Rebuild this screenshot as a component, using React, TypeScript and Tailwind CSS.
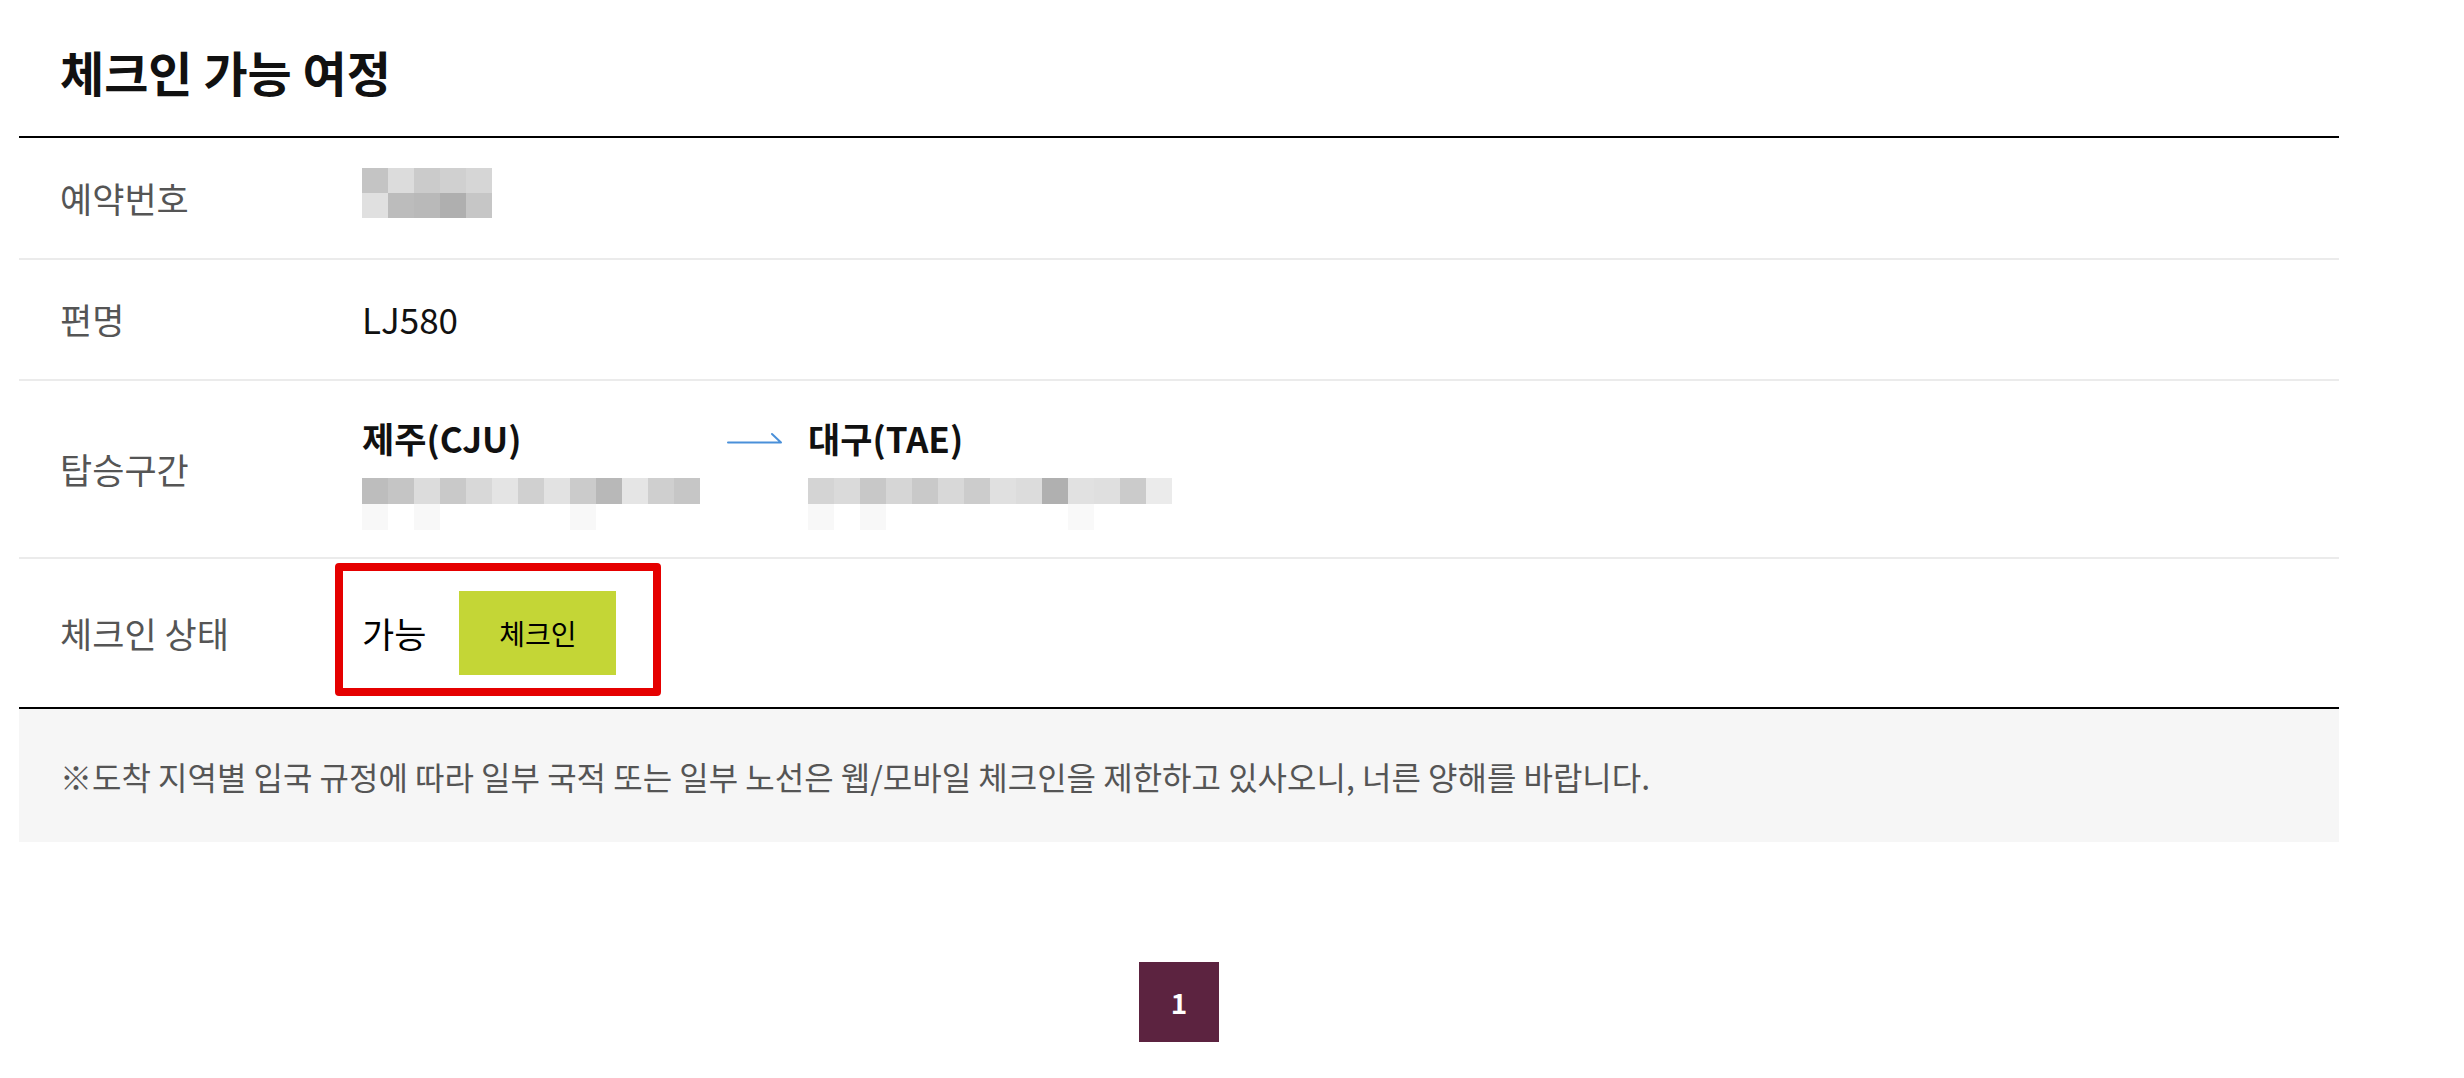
import React from 'react';

const FONT = { fontFamily: '"Noto Sans CJK KR", "Noto Sans", sans-serif' };

const bookingBlur = [
  ['#c4c4c4', '#dcdcdc', '#cbcbcb', '#d0d0d0', '#d6d6d6'],
  ['#e0e0e0', '#bcbcbc', '#b9b9b9', '#afafaf', '#c6c6c6'],
];

const departBlur = [
  ['#bdbdbd', '#c5c5c5', '#dcdcdc', '#c9c9c9', '#d8d8d8', '#e4e4e4', '#d0d0d0', '#e2e2e2', '#cbcbcb', '#b8b8b8', '#e5e5e5', '#cfcfcf', '#c6c6c6'],
  ['#f8f8f8', '#ffffff', '#f8f8f8', '#ffffff', '#ffffff', '#ffffff', '#ffffff', '#ffffff', '#f8f8f8', '#ffffff', '#ffffff', '#ffffff', '#ffffff'],
];

const arriveBlur = [
  ['#d4d4d4', '#dadada', '#c8c8c8', '#d6d6d6', '#c9c9c9', '#d8d8d8', '#cccccc', '#e0e0e0', '#dcdcdc', '#b0b0b0', '#e1e1e1', '#dfdfdf', '#cbcbcb', '#ebebeb'],
  ['#f8f8f8', '#ffffff', '#f8f8f8', '#ffffff', '#ffffff', '#ffffff', '#ffffff', '#ffffff', '#ffffff', '#ffffff', '#f9f9f9', '#ffffff', '#ffffff', '#ffffff'],
];

// masked personal info, drawn as a pixelated block
const Mosaic = ({ rows, h }: { rows: string[][]; h: number }) => (
  <div className="flex flex-col">
    {rows.map((row, i) => (
      <div key={i} className="flex">
        {row.map((c, j) => (
          <div key={j} className="w-[26px]" style={{ backgroundColor: c, height: h }} />
        ))}
      </div>
    ))}
  </div>
);

const Label = ({ children }: { children: React.ReactNode }) => (
  <div className="w-[343px] shrink-0 pl-[41px] text-[35px] text-[#555555]">{children}</div>
);

const App: React.FC = () => {
  return (
    <div className="min-h-screen bg-white" style={FONT}>
      <div className="ml-[19px] w-[2320px]">
        <div className="h-[136px] pl-[41px] pt-[47px]">
          <h2 className="text-[48px] leading-[48px] font-bold text-[#111111]">체크인 가능 여정</h2>
        </div>

        <div className="border-t-2 border-black">
          {/* 예약번호 */}
          <div className="flex h-[122px] items-center border-b-2 border-[#ebebeb]">
            <Label>예약번호</Label>
            <div className="mb-[10px]">
              <Mosaic rows={bookingBlur} h={25} />
            </div>
          </div>

          {/* 편명 */}
          <div className="flex h-[121px] items-center border-b-2 border-[#ebebeb]">
            <Label>편명</Label>
            <div className="text-[35px] text-[#111111]">LJ580</div>
          </div>

          {/* 탑승구간 */}
          <div className="flex h-[178px] items-center border-b-2 border-[#ebebeb]">
            <Label>탑승구간</Label>
            <div className="flex items-start pt-[10px]">
              <div className="w-[340px]">
                <div className="text-[35px] leading-[40px] font-bold text-[#111111]">제주(CJU)</div>
                <div className="mt-[20px]">
                  <Mosaic rows={departBlur} h={26} />
                </div>
              </div>
              <div className="ml-[25px] flex h-[40px] items-center">
                <svg width="56" height="16" viewBox="0 0 56 16" fill="none">
                  <path d="M1 12.5 H54 L45 4" stroke="#4a90d9" strokeWidth="2" strokeLinecap="round" strokeLinejoin="round" />
                </svg>
              </div>
              <div className="ml-[25px]">
                <div className="text-[35px] leading-[40px] font-bold text-[#111111]">대구(TAE)</div>
                <div className="mt-[20px]">
                  <Mosaic rows={arriveBlur} h={26} />
                </div>
              </div>
            </div>
          </div>

          {/* 체크인 상태 */}
          <div className="flex h-[150px] items-center border-b-2 border-black">
            <Label>체크인 상태</Label>
            <div className="relative flex items-center">
              <span className="text-[35px] text-black">가능</span>
              <button className="ml-[33px] flex h-[84px] w-[157px] items-center justify-center bg-[#c4d636] text-[28px] text-black">
                체크인
              </button>
              <div className="pointer-events-none absolute left-[-27px] top-[-28px] h-[133px] w-[326px] rounded-[4px] border-[8px] border-[#e50000]" />
            </div>
          </div>
        </div>

        <div className="flex h-[133px] items-center bg-[#f6f6f6] pl-[41px] text-[32px] text-[#555555]">
          ※도착 지역별 입국 규정에 따라 일부 국적 또는 일부 노선은 웹/모바일 체크인을 제한하고 있사오니, 너른 양해를 바랍니다.
        </div>

        <div className="mt-[120px] flex justify-center">
          <div className="flex h-[80px] w-[80px] items-center justify-center bg-[#5c2340] text-[28px] font-bold text-white">
            1
          </div>
        </div>
      </div>
    </div>
  );
};

export default App;
